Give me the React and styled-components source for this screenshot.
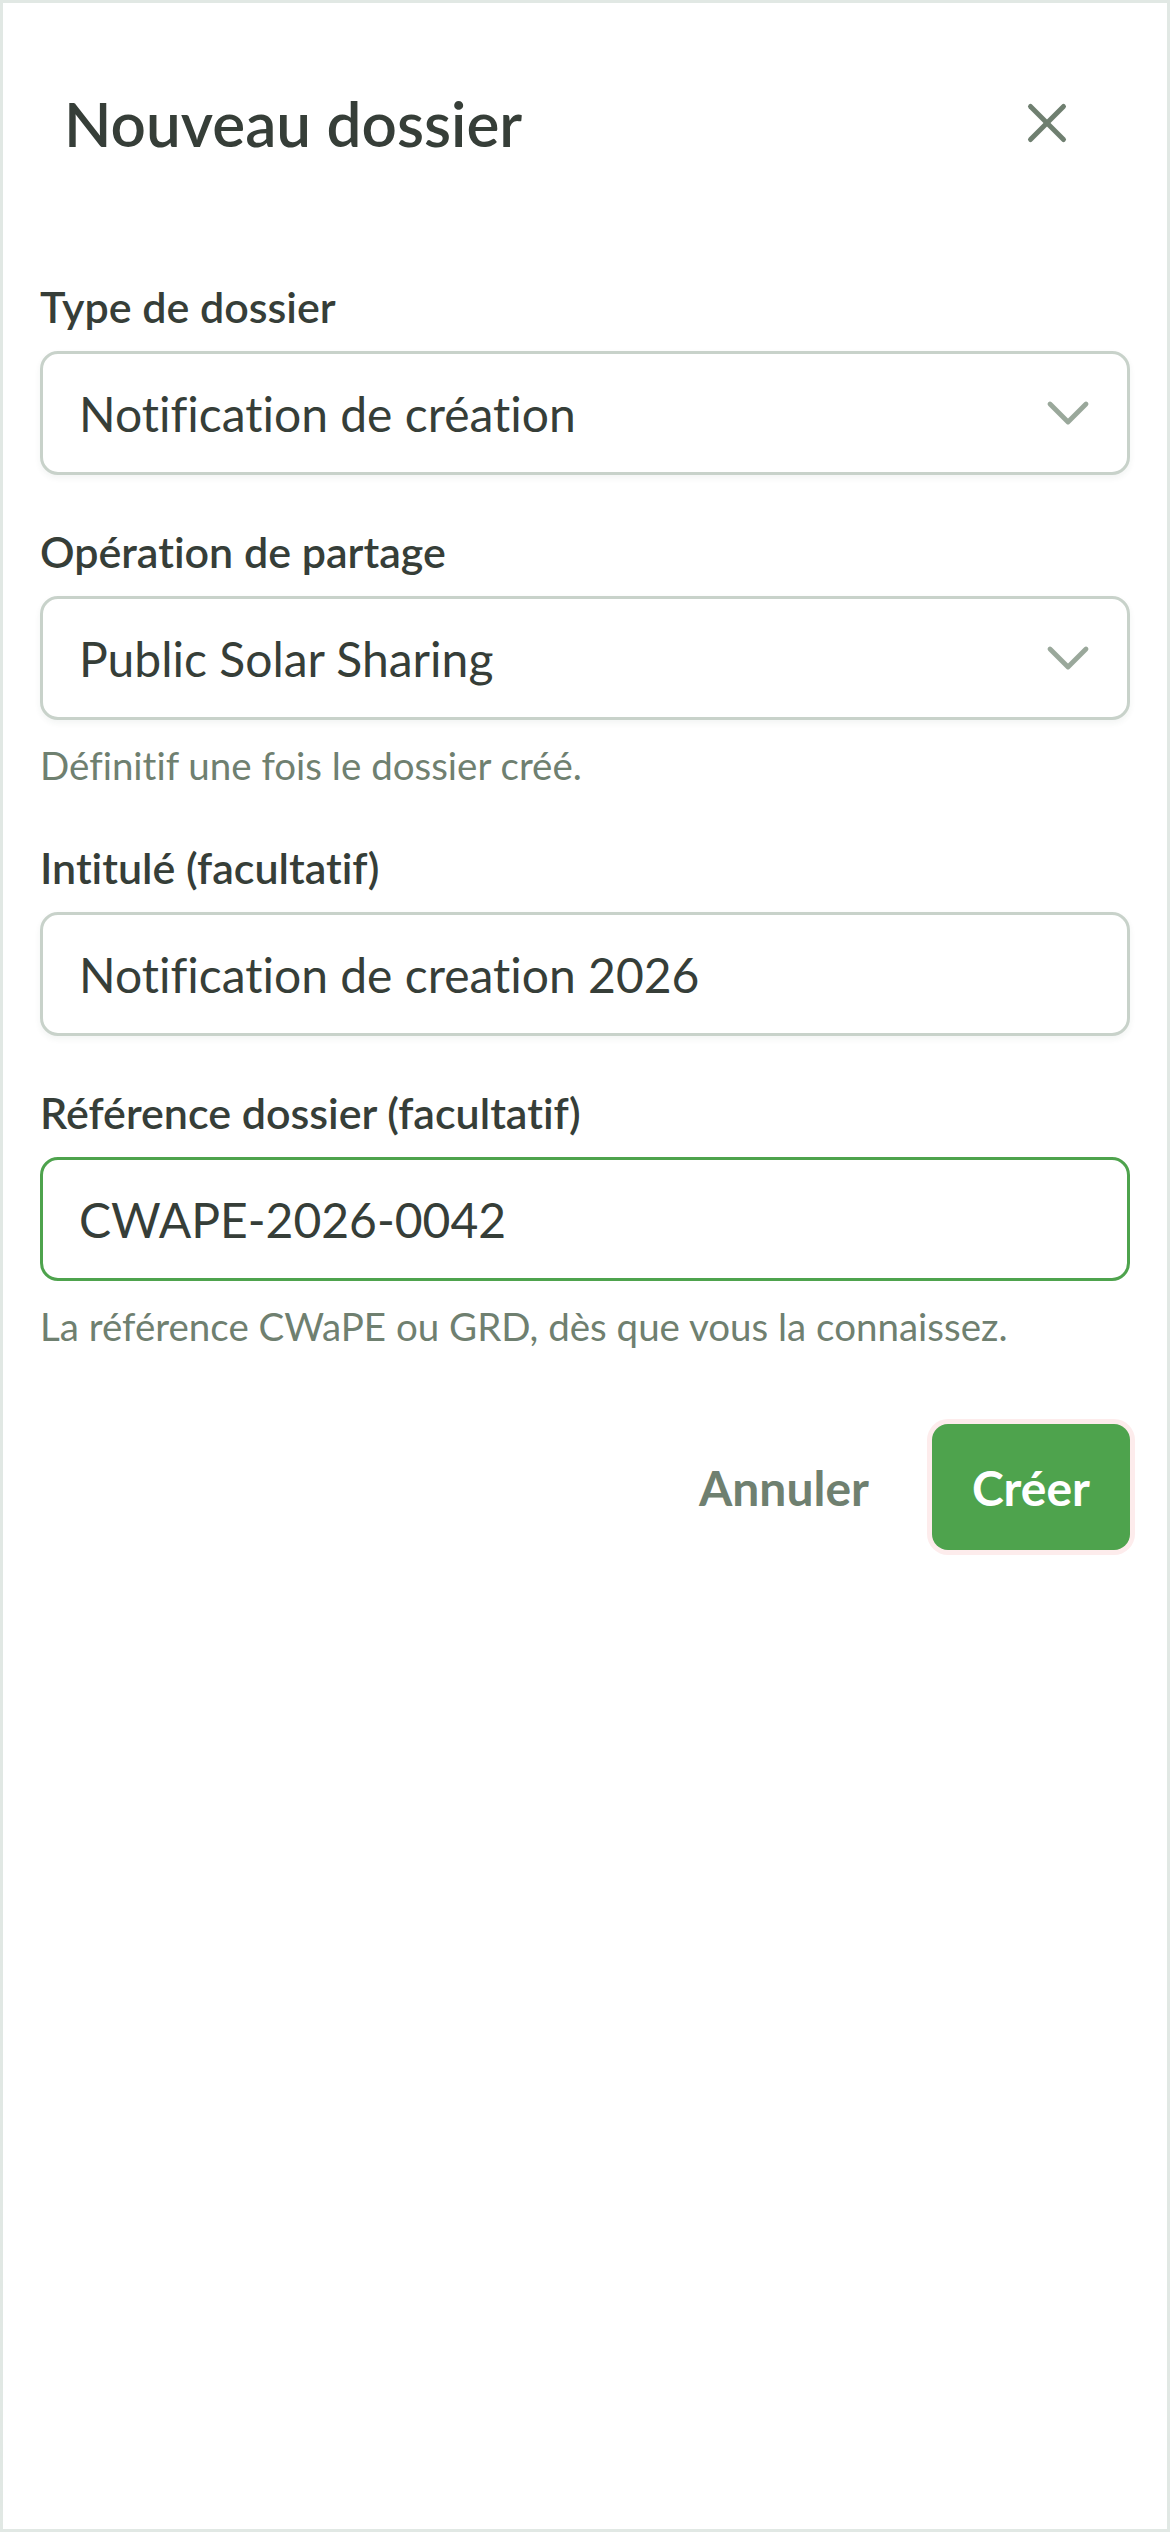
import React, { useState } from "react";
import styled, { createGlobalStyle } from "styled-components";

const FONT = `"Lato", "Noto Sans", sans-serif`;

const GlobalStyle = createGlobalStyle`
  * {
    box-sizing: border-box;
    font-variant-ligatures: none;
    font-feature-settings: "liga" 0, "clig" 0;
  }
  body {
    margin: 0;
    background: #ffffff;
    font-family: ${FONT};
    color: #363e38;
  }
`;

const Frame = styled.div`
  min-height: 100vh;
  border: 3px solid #e1e8e4;
  background: #ffffff;
`;

const Form = styled.form`
  display: flex;
  flex-direction: column;
  padding: 78px 37px 0;
`;

const Header = styled.div`
  display: flex;
  align-items: center;
  justify-content: space-between;
  height: 84px;
  padding: 0 50px 0 24px;
  margin-bottom: 114px;
`;

const Title = styled.h1`
  margin: 0;
  font-size: 62px;
  line-height: 84px;
  font-weight: 600;
  color: #363e38;
`;

const IconButton = styled.button`
  display: flex;
  align-items: center;
  justify-content: center;
  padding: 0;
  border: none;
  background: none;
  color: #6f7f70;
  cursor: pointer;
`;

const Field = styled.div`
  display: flex;
  flex-direction: column;
  margin-bottom: ${(p) => p.$gap ?? 49}px;
`;

const Label = styled.label`
  font-size: 43px;
  line-height: 56px;
  font-weight: 600;
  color: #363e38;
  margin-bottom: 16px;
`;

const controlBase = `
  width: 100%;
  height: 124px;
  border-radius: 18px;
  background: #ffffff;
  font-family: ${FONT};
  font-size: 48px;
  color: #363e38;
  outline: none;
`;

const SelectTrigger = styled.button`
  ${controlBase}
  display: flex;
  align-items: center;
  justify-content: space-between;
  padding: 0 23px 0 36px;
  border: 3px solid #c8d2ca;
  box-shadow: 0 3px 6px rgba(40, 60, 45, 0.06);
  text-align: left;
  cursor: pointer;
`;

const TextInput = styled.input`
  ${controlBase}
  padding: 0 36px;
  border: 3px solid ${(p) => (p.$active ? "#4ea34d" : "#c8d2ca")};
  box-shadow: ${(p) => (p.$active ? "none" : "0 3px 6px rgba(40, 60, 45, 0.06)")};
`;

const Hint = styled.p`
  margin: 19px 0 0;
  font-size: 38.5px;
  line-height: 52px;
  color: #6f8070;
`;

const Actions = styled.div`
  display: flex;
  justify-content: flex-end;
  align-items: center;
  gap: 23px;
  margin-top: 72px;
`;

const GhostButton = styled.button`
  height: 126px;
  padding: 0 40px;
  border: none;
  background: none;
  font-family: ${FONT};
  font-size: 48px;
  font-weight: 700;
  color: #6f8070;
  cursor: pointer;
`;

const PrimaryButton = styled.button`
  height: 126px;
  padding: 0 40px;
  border: none;
  border-radius: 16px;
  background: #4ea34d;
  box-shadow: 0 0 0 5px #fdecec;
  font-family: ${FONT};
  font-size: 48px;
  font-weight: 700;
  color: #ffffff;
  cursor: pointer;
`;

function CloseIcon() {
  return (
    <svg width="66" height="66" viewBox="0 0 24 24" fill="none" stroke="currentColor" strokeWidth="1.8" strokeLinecap="round" strokeLinejoin="round">
      <path d="M18 6 6 18" />
      <path d="m6 6 12 12" />
    </svg>
  );
}

function Chevron() {
  return (
    <svg width="72" height="72" viewBox="0 0 24 24" fill="none" stroke="#9aa89b" strokeWidth="1.6" strokeLinecap="round" strokeLinejoin="round">
      <path d="m6 9 6 6 6-6" />
    </svg>
  );
}

export default function App() {
  const [title, setTitle] = useState("Notification de creation 2026");
  const [reference, setReference] = useState("CWAPE-2026-0042");

  return (
    <Frame>
      <GlobalStyle />
      <Form onSubmit={(evt) => evt.preventDefault()}>
        <Header>
          <Title>Nouveau dossier</Title>
          <IconButton type="button" aria-label="Fermer">
            <CloseIcon />
          </IconButton>
        </Header>

        <Field>
          <Label>Type de dossier</Label>
          <SelectTrigger type="button">
            <span>Notification de création</span>
            <Chevron />
          </SelectTrigger>
        </Field>

        <Field>
          <Label>Opération de partage</Label>
          <SelectTrigger type="button">
            <span>Public Solar Sharing</span>
            <Chevron />
          </SelectTrigger>
          <Hint>Définitif une fois le dossier créé.</Hint>
        </Field>

        <Field>
          <Label htmlFor="intitule">Intitulé (facultatif)</Label>
          <TextInput id="intitule" value={title} onChange={(evt) => setTitle(evt.target.value)} />
        </Field>

        <Field $gap={0}>
          <Label htmlFor="reference">Référence dossier (facultatif)</Label>
          <TextInput id="reference" $active value={reference} onChange={(evt) => setReference(evt.target.value)} />
          <Hint>La référence CWaPE ou GRD, dès que vous la connaissez.</Hint>
        </Field>

        <Actions>
          <GhostButton type="button">Annuler</GhostButton>
          <PrimaryButton type="submit">Créer</PrimaryButton>
        </Actions>
      </Form>
    </Frame>
  );
}
